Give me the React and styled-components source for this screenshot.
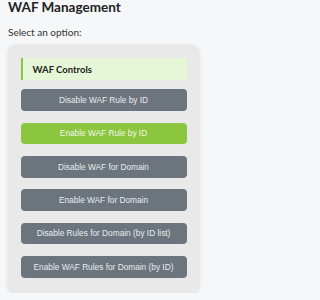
import styled, { createGlobalStyle } from "styled-components";

const GlobalStyle = createGlobalStyle`
  body {
    margin: 0;
    background: #f6f7f8;
    font-family: Lato, "Open Sans", sans-serif;
  }
`;

const Page = styled("div")`
  width: 209px;
  box-sizing: border-box;
  padding: 0 10px 0 8px;
`;

const Title = styled("h1")`
  margin: 0;
  font-size: 13.5px;
  line-height: 15px;
  font-weight: 700;
  color: #222222;
`;

const Subtitle = styled("p")`
  margin: 10px 0 0;
  font-size: 10px;
  line-height: 14px;
  color: #333333;
`;

const Panel = styled("div")`
  margin-top: 6px;
  padding: 13.3px 12.5px 15px;
  background-color: #e9e9e9;
  border-radius: 8px;
  box-shadow: 0 1px 4px rgba(0, 0, 0, 0.12);
  display: flex;
  flex-direction: column;
  gap: 11.67px;
`;

const PanelHeader = styled("div")`
  height: 21.7px;
  margin-bottom: -2.3px;
  display: flex;
  align-items: center;
  padding-left: 10px;
  background-color: #e5f7d7;
  border-left: 2px solid #8cc63f;
  font-size: 9.5px;
  font-weight: 700;
  color: #222222;
`;

const ActionButton = styled("button")`
  height: 21.67px;
  border: none;
  border-radius: 4px;
  background-color: ${(p) => (p.$active ? "#8cc63f" : "#6c757d")};
  color: ${(p) => (p.$active ? "#f0f8e8" : "#e9ecef")};
  font-family: "Liberation Sans", Arial, sans-serif;
  font-size: 8.3px;
  padding: 0;
  cursor: pointer;
`;

const ACTIONS = [
  "Disable WAF Rule by ID",
  "Enable WAF Rule by ID",
  "Disable WAF for Domain",
  "Enable WAF for Domain",
  "Disable Rules for Domain (by ID list)",
  "Enable WAF Rules for Domain (by ID)",
];

export default function App() {
  return (
    <Page>
      <GlobalStyle />
      <Title>WAF Management</Title>
      <Subtitle>Select an option:</Subtitle>
      <Panel>
        <PanelHeader>WAF Controls</PanelHeader>
        {ACTIONS.map((label, index) => (
          <ActionButton key={label} $active={index === 1}>
            {label}
          </ActionButton>
        ))}
      </Panel>
    </Page>
  );
}
